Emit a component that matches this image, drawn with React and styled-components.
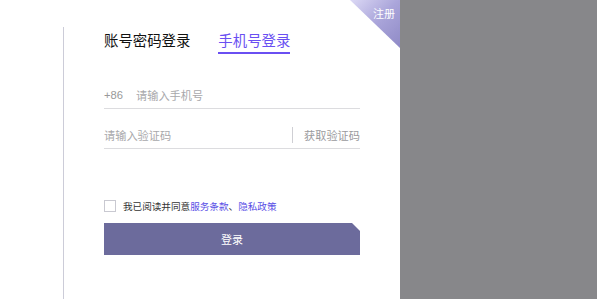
import React, { useState } from "react";
import styled, { createGlobalStyle } from "styled-components";

const GlobalStyle = createGlobalStyle`
  html, body { margin: 0; padding: 0; }
  body {
    font-family: "Noto Sans CJK SC", "Noto Sans", sans-serif;
    background: #87878a;
  }
`;

export default function App() {
  const [tab, setTab] = useState("phone");
  const [agree, setAgree] = useState(false);

  return (
    <>
      <GlobalStyle />
      <Page>
        <Panel>
          <Corner>注册</Corner>
          <Inner>
            <Tabs>
              <Tab active={tab === "account"} onClick={() => setTab("account")}>
                账号密码登录
              </Tab>
              <Tab active={tab === "phone"} onClick={() => setTab("phone")}>
                手机号登录
              </Tab>
            </Tabs>

            <Field style={{ marginTop: 33 }}>
              <Prefix>+86</Prefix>
              <Input placeholder="请输入手机号" />
            </Field>

            <Field style={{ marginTop: 18 }}>
              <Input placeholder="请输入验证码" />
              <Divider />
              <SendCode>获取验证码</SendCode>
            </Field>

            <Agree>
              <Check checked={agree} onClick={() => setAgree(!agree)} />
              <span>
                我已阅读并同意<Link>服务条款</Link>、<Link>隐私政策</Link>
              </span>
            </Agree>

            <Submit>登录</Submit>
          </Inner>
        </Panel>
        <Shade />
      </Page>
    </>
  );
}

const Page = styled.div`
  display: flex;
  width: 100%;
  height: 299px;
`;

const Panel = styled.div`
  position: relative;
  width: 400px;
  height: 299px;
  background: #fff;
  overflow: hidden;
`;

const Shade = styled.div`
  flex: 1;
  background: #87878a;
`;

const Corner = styled.div`
  position: absolute;
  top: 0;
  right: 0;
  width: 50px;
  height: 48px;
  background: linear-gradient(135deg, #dcd9f5 0%, #aaa5da 50%, #8f8ac6 100%);
  clip-path: polygon(0 0, 100% 0, 100% 100%);
  color: #fff;
  font-size: 11px;
  line-height: 14px;
  text-align: right;
  padding: 6px 5px 0 0;
  box-sizing: border-box;
  cursor: pointer;
`;

const Inner = styled.div`
  margin: 27px 0 0 63px;
  height: 272px;
  border-left: 1px solid #ccccd8;
  padding-left: 40px;
  width: 256px;
  display: flex;
  flex-direction: column;
`;

const Tabs = styled.div`
  display: flex;
  gap: 28px;
  margin-top: 3px;
`;

const Tab = styled.div`
  font-size: 14.4px;
  line-height: 20px;
  padding-bottom: 2px;
  border-bottom: 2px solid ${(p) => (p.active ? "#6a4ff2" : "transparent")};
  color: ${(p) => (p.active ? "#6a4ff2" : "#111")};
  cursor: pointer;
`;

const Field = styled.div`
  display: flex;
  align-items: center;
  height: 16px;
  padding-bottom: 5px;
  border-bottom: 1px solid #dcdcdf;
`;

const Prefix = styled.span`
  font-size: 11.2px;
  color: #999;
  width: 32px;
  font-family: "Liberation Sans", "Noto Sans CJK SC", sans-serif;
`;

const Input = styled.input`
  flex: 1;
  min-width: 0;
  border: none;
  outline: none;
  padding: 0;
  font-family: inherit;
  font-size: 11.2px;
  line-height: 16px;
  color: #333;
  background: transparent;
  &::placeholder { color: #a8a8ab; }
`;

const Divider = styled.span`
  width: 1px;
  height: 16px;
  background: #cfcfd4;
  margin-right: 11px;
`;

const SendCode = styled.span`
  font-size: 11.2px;
  color: #9a9a9d;
  cursor: pointer;
`;

const Agree = styled.label`
  display: flex;
  align-items: center;
  gap: 7px;
  margin-top: 51px;
  height: 12px;
  font-size: 9.6px;
  color: #333;
  white-space: nowrap;
`;

const Check = styled.span`
  width: 12px;
  height: 12px;
  box-sizing: border-box;
  border: 1px solid #c9c9d1;
  background: ${(p) => (p.checked ? "#6a4ff2" : "#fff")};
  cursor: pointer;
`;

const Link = styled.a`
  color: #5a4fe6;
  cursor: pointer;
`;

const Submit = styled.button`
  margin-top: 11px;
  height: 32px;
  width: 100%;
  border: none;
  background: #6c6b9c;
  color: #fff;
  font-family: inherit;
  font-size: 11px;
  clip-path: polygon(0 0, calc(100% - 8px) 0, 100% 8px, 100% 100%, 0 100%);
  cursor: pointer;
`;
